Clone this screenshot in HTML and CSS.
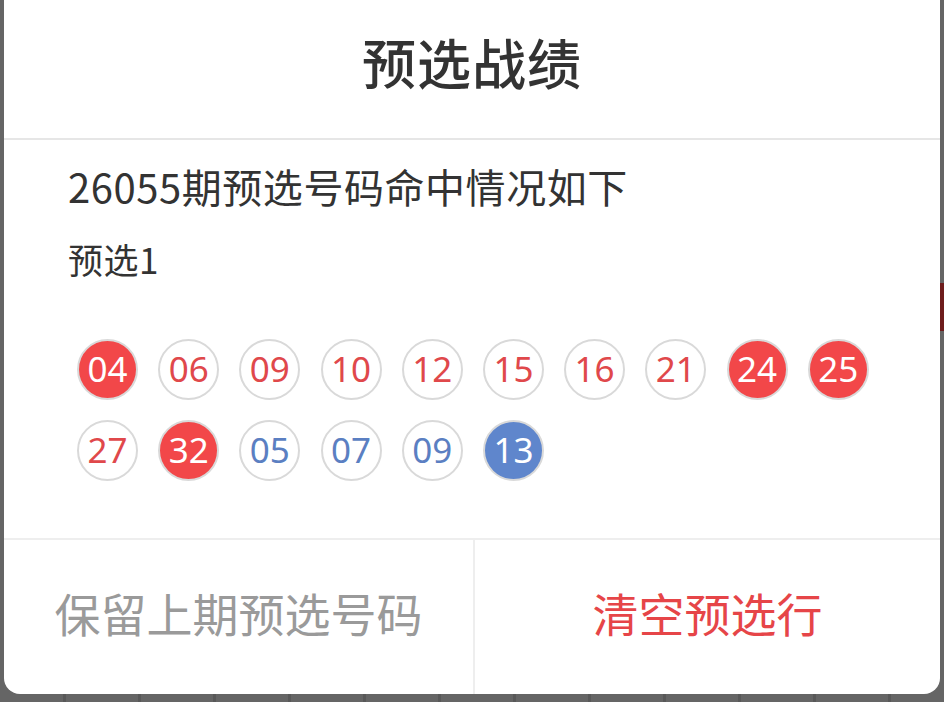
FILE: index.html
```html
<!DOCTYPE html>
<html lang="zh-CN">
<head>
<meta charset="utf-8">
<link rel="stylesheet" href="styles.css">
</head>
<body>
<div class="stage">
  <div class="edge-mark"></div>
  <div class="dialog">
    <div class="header">预选战绩</div>
    <div class="content">
      <div class="headline">26055期预选号码命中情况如下</div>
      <div class="group-title">预选1</div>
      <div class="balls">
        <span class="ball red hit">04</span>
        <span class="ball red">06</span>
        <span class="ball red">09</span>
        <span class="ball red">10</span>
        <span class="ball red">12</span>
        <span class="ball red">15</span>
        <span class="ball red">16</span>
        <span class="ball red">21</span>
        <span class="ball red hit">24</span>
        <span class="ball red hit">25</span>
        <span class="ball red">27</span>
        <span class="ball red hit">32</span>
        <span class="ball blue">05</span>
        <span class="ball blue">07</span>
        <span class="ball blue">09</span>
        <span class="ball blue hit">13</span>
      </div>
    </div>
    <div class="actions">
      <div class="action keep">保留上期预选号码</div>
      <div class="action clear">清空预选行</div>
    </div>
  </div>
</div>
</body>
</html>
```

FILE: styles.css
```css
* { box-sizing: border-box; }
html, body {
  margin: 0;
  padding: 0;
}
body {
  width: 944px;
  height: 702px;
  overflow: hidden;
  background-color: #656565;
  background-image: repeating-linear-gradient(90deg, transparent 0, transparent 63px, #585858 63px, #585858 66px, transparent 66px, transparent 75px);
  font-family: "Noto Sans CJK SC", "Noto Sans", sans-serif;
}
.stage {
  position: relative;
  padding: 0 4px;
  background: #656565;
  height: 694px;
}
.edge-mark {
  position: absolute;
  right: 0;
  top: 283px;
  width: 4px;
  height: 48px;
  background: #6e1c1c;
}
.dialog {
  background: #fff;
  height: 694px;
  border-radius: 0 0 16px 16px;
  display: flex;
  flex-direction: column;
}
.header {
  height: 140px;
  border-bottom: 2px solid #e6e6e6;
  display: flex;
  align-items: center;
  justify-content: center;
  padding-bottom: 16px;
  font-size: 54px;
  font-weight: 500;
  color: #333;
  letter-spacing: 1px;
}
.content {
  flex: 1;
  padding: 22px 0 0 64px;
}
.headline {
  font-size: 40px;
  line-height: 48px;
  color: #333;
  letter-spacing: 0.55px;
}
.group-title {
  margin-top: 28px;
  font-size: 35px;
  line-height: 42px;
  color: #333;
  letter-spacing: 0.5px;
}
.balls {
  margin-top: 59px;
  padding-left: 9px;
  display: grid;
  grid-template-columns: repeat(10, 61px);
  column-gap: 20.2px;
  row-gap: 20px;
}
.ball {
  width: 61px;
  height: 61px;
  border-radius: 50%;
  border: 2px solid #d9d9d9;
  display: flex;
  align-items: center;
  justify-content: center;
  font-family: "Noto Sans", "Open Sans", sans-serif;
  font-size: 35px;
  line-height: 1;
  padding-bottom: 2px;
}
.ball.red { color: #e0484b; }
.ball.blue { color: #5b7fc2; }
.ball.red.hit { background: #f24749; color: #fff; }
.ball.blue.hit { background: #5f86cc; color: #fff; }
.actions {
  height: 156px;
  border-top: 2px solid #eeeeee;
  display: flex;
}
.action {
  display: flex;
  align-items: center;
  justify-content: center;
  font-size: 46px;
  padding-bottom: 10px;
}
.keep {
  flex: 0 0 471px;
  color: #9a9a9a;
  border-right: 2px solid #eeeeee;
}
.clear {
  flex: 1;
  color: #e64548;
}
```
